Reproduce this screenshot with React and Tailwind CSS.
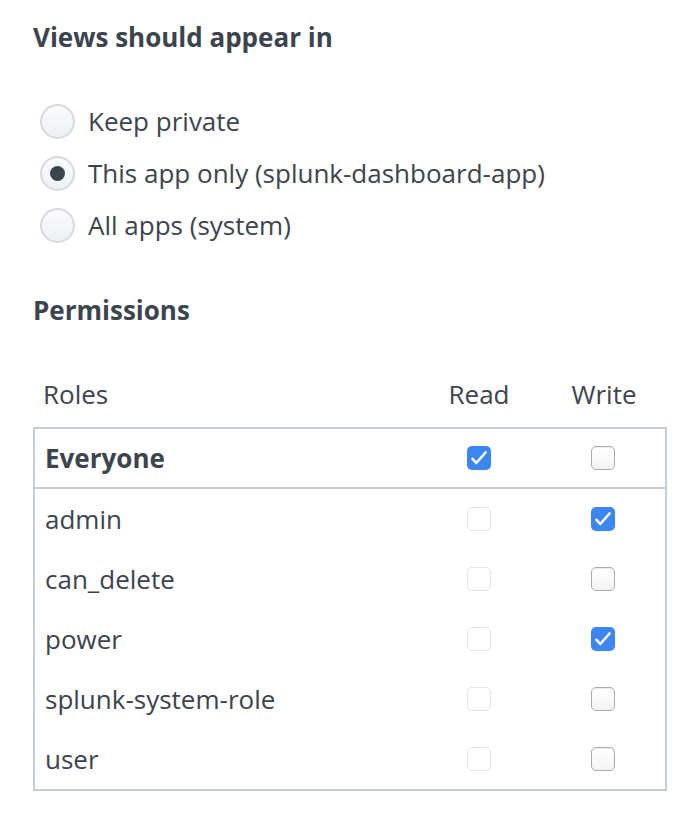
import React from "react";

const roles = [
  { name: "admin", read: false, write: true },
  { name: "can_delete", read: false, write: false },
  { name: "power", read: false, write: true },
  { name: "splunk-system-role", read: false, write: false },
  { name: "user", read: false, write: false },
];

function Radio({ checked, label }) {
  return (
    <label className="flex items-center h-[52px]">
      <span className="ml-[7px] w-[35px] h-[35px] rounded-full border-2 border-[#d6d9de] bg-gradient-to-b from-[#fbfbfc] to-[#eef0f3] flex items-center justify-center">
        {checked && <span className="w-[15px] h-[15px] rounded-full bg-[#3c444d]" />}
      </span>
      <span className="ml-[13px]">{label}</span>
    </label>
  );
}

function Check({ checked, disabled }) {
  if (checked) {
    return (
      <span className="w-[24px] h-[24px] rounded-[5px] bg-[#3b86f0] flex items-center justify-center">
        <svg width="24" height="24" viewBox="0 0 24 24" fill="none">
          <path d="M5.5 12.8l3.8 4.2L18.5 6.5" stroke="white" strokeWidth="2.6" strokeLinecap="round" strokeLinejoin="round" />
        </svg>
      </span>
    );
  }
  return (
    <span
      className={
        disabled
          ? "w-[24px] h-[24px] rounded-[5px] border border-[#e3e4e6] bg-white"
          : "w-[24px] h-[24px] rounded-[5px] border-[1.5px] border-[#a9abae] bg-gradient-to-b from-white to-[#f4f4f5] shadow-[inset_0_1px_1px_rgba(0,0,0,0.08)]"
      }
    />
  );
}

export default function App() {
  return (
    <div
      className="w-[692px] h-[822px] bg-white text-[#3c444d] text-[26px] pl-[33px] pt-[22px]"
      style={{ fontFamily: "'Open Sans', Lato, sans-serif" }}
    >
      {/* 보기 위치 */}
      <h2 className="font-bold leading-[30px]">Views should appear in</h2>
      <div className="mt-[43px] flex flex-col">
        <Radio label="Keep private" />
        <Radio checked label="This app only (splunk-dashboard-app)" />
        <Radio label="All apps (system)" />
      </div>

      {/* 권한 */}
      <h2 className="mt-[44px] font-bold leading-[30px]">Permissions</h2>

      <div className="mt-[49px] w-[634px] grid grid-cols-[1fr_124px_126px] items-center h-[40px]">
        <span className="pl-[10px]">Roles</span>
        <span className="text-center">Read</span>
        <span className="text-center">Write</span>
      </div>

      <div className="mt-[13px] w-[634px] border-2 border-[#c5ccd4]">
        <div className="grid grid-cols-[1fr_124px_124px] items-center h-[60px] border-b-2 border-[#c5ccd4]">
          <span className="pl-[10px] font-bold">Everyone</span>
          <span className="flex justify-center"><Check checked /></span>
          <span className="flex justify-center"><Check /></span>
        </div>
        {roles.map((r) => (
          <div key={r.name} className="grid grid-cols-[1fr_124px_124px] items-center h-[60px]">
            <span className="pl-[10px]">{r.name}</span>
            <span className="flex justify-center"><Check checked={r.read} disabled /></span>
            <span className="flex justify-center"><Check checked={r.write} /></span>
          </div>
        ))}
      </div>
    </div>
  );
}
